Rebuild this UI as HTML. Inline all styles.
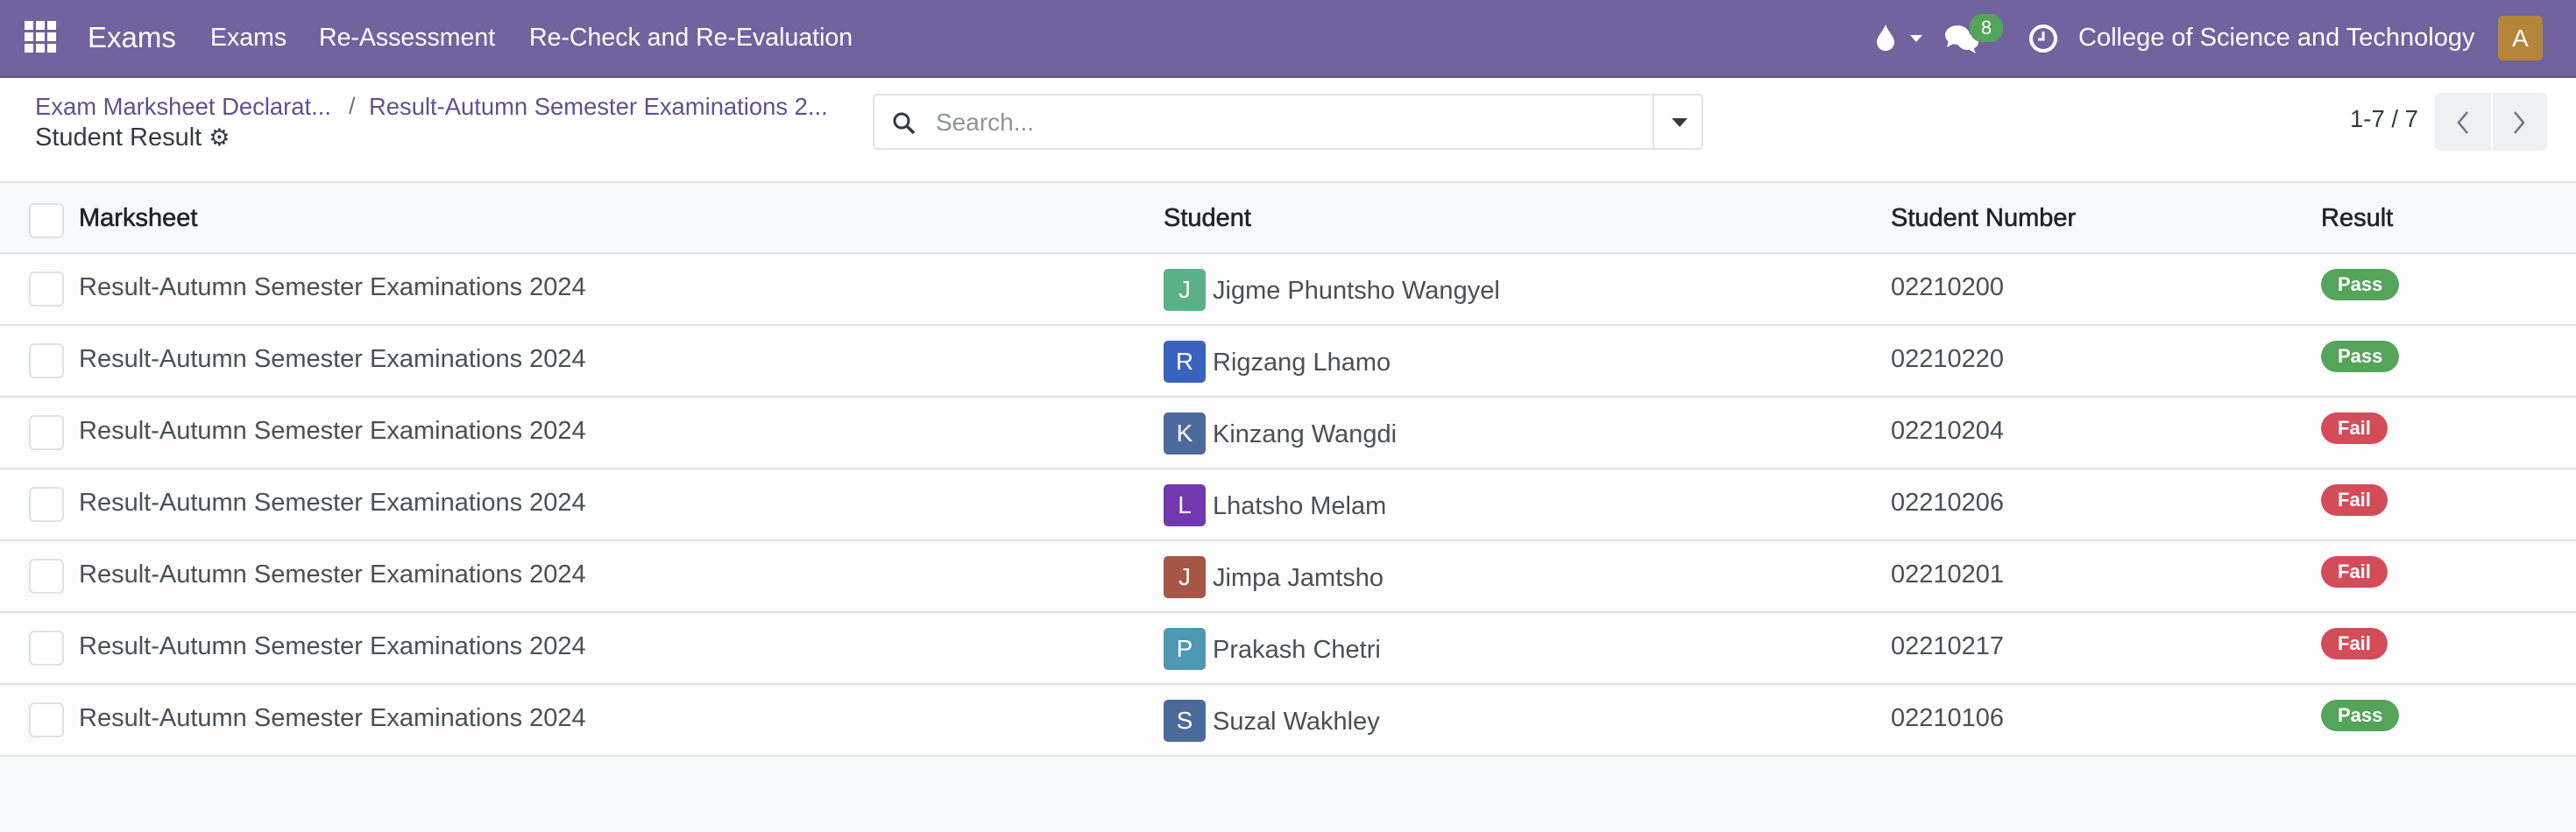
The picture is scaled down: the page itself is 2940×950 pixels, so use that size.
<!DOCTYPE html>
<html><head><meta charset="utf-8"><style>
*{box-sizing:border-box;margin:0;padding:0}
body{width:2940px;height:950px;background:#f8f9fa;font-family:"Liberation Sans",sans-serif;color:#495057;font-size:29px;position:relative;overflow:hidden}
.nav{position:absolute;left:0;top:0;width:2940px;height:89px;background:#71639e;border-bottom:2px solid #5d5283;color:#fff}
.a{position:absolute;white-space:nowrap}
.cp{position:absolute;left:0;top:89px;width:2940px;height:119px;background:#fff}
.crumb{color:#5f5190}
.tbl{position:absolute;left:0;top:207px;width:2940px}
.hdr{height:83px;background:#f8f9fa;border-top:2px solid #dee2e6;border-bottom:2px solid #dee2e6;position:relative;color:#212529;-webkit-text-stroke:0.6px #212529}
.row{height:82px;border-bottom:2px solid #dee2e6;position:relative;background:#fff}
.row:nth-child(odd){background:#fcfcfc}
.cb{position:absolute;left:33px;width:40px;height:40px;border:2px solid #dee2e6;border-radius:6px;background:#fff;-webkit-text-stroke:0}
.av{position:absolute;left:1328px;top:17px;width:48px;height:48px;border-radius:5px;color:#fff;text-align:center;line-height:48px;font-size:28px}
.bd{position:absolute;left:2649px;top:17px;height:36px;border-radius:18px;color:#fff;font-weight:bold;font-size:22px;line-height:36px;padding:0 19px}
.pass{background:#54a45a}.fail{background:#d44c59}
</style></head><body>
<div class="nav">
 <svg class="a" style="left:28px;top:24px" width="36" height="36" viewBox="0 0 36 36" fill="#fff"><rect x="0" y="0" width="10" height="10"/><rect x="13" y="0" width="10" height="10"/><rect x="26" y="0" width="10" height="10"/><rect x="0" y="13" width="10" height="10"/><rect x="13" y="13" width="10" height="10"/><rect x="26" y="13" width="10" height="10"/><rect x="0" y="26" width="10" height="10"/><rect x="13" y="26" width="10" height="10"/><rect x="26" y="26" width="10" height="10"/></svg>
 <div class="a" style="left:100px;top:24px;font-size:33px">Exams</div>
 <div class="a" style="left:240px;top:27px;font-size:28.5px">Exams</div>
 <div class="a" style="left:364px;top:27px;font-size:28.5px">Re-Assessment</div>
 <div class="a" style="left:604px;top:27px;font-size:28.5px">Re-Check and Re-Evaluation</div>
 <svg class="a" style="left:2142px;top:28px" width="20" height="30" viewBox="0 0 20 30"><path d="M10 0C7 8 0 14 0 20a10 10 0 0 0 20 0C20 14 13 8 10 0z" fill="#fff"/></svg>
 <div class="a" style="left:2180px;top:40px;border-left:7px solid transparent;border-right:7px solid transparent;border-top:8px solid #fff"></div>
 <svg class="a" style="left:2220px;top:28px" width="40" height="34" viewBox="0 0 40 34" fill="#fff"><ellipse cx="14" cy="12" rx="14" ry="11"/><path d="M4 18l-2 8 9-5z"/><ellipse cx="26" cy="20" rx="12" ry="9"/><path d="M32 26l3 7-9-5z"/></svg>
 <div class="a" style="left:2248px;top:16px;width:38px;height:32px;border-radius:14px;background:#54a45a;color:#fff;font-size:22px;text-align:center;line-height:32px">8</div>
 <svg class="a" style="left:2315px;top:27px" width="34" height="34" viewBox="0 0 34 34"><circle cx="17" cy="17" r="14" fill="none" stroke="#fff" stroke-width="4"/><path d="M17 9v9h-6" fill="none" stroke="#fff" stroke-width="3"/></svg>
 <div class="a" style="left:2372px;top:27px;font-size:29px">College of Science and Technology</div>
 <div class="a" style="left:2851px;top:18px;width:51px;height:51px;border-radius:6px;background:#b5853a;color:#fff;text-align:center;line-height:51px;font-size:28px">A</div>
</div>
<div class="cp">
 <div class="a crumb" style="left:40px;top:17px;font-size:27.4px">Exam Marksheet Declarat...</div>
 <div class="a" style="left:398px;top:17px;font-size:27px;color:#6c757d">/</div>
 <div class="a crumb" style="left:421px;top:17px;font-size:27.4px">Result-Autumn Semester Examinations 2...</div>
 <div class="a" style="left:40px;top:52px;font-size:29px;color:#343a40">Student Result <span style="font-size:27px">⚙</span></div>
 <div class="a" style="left:996px;top:18px;width:948px;height:64px;border:2px solid #dee2e6;border-radius:6px;background:#fff">
  <svg class="a" style="left:20px;top:18px" width="28" height="28" viewBox="0 0 28 28"><circle cx="11" cy="11" r="8" fill="none" stroke="#343a40" stroke-width="3"/><path d="M17 17l8 8" stroke="#343a40" stroke-width="3.5"/></svg>
  <div class="a" style="left:70px;top:15px;color:#8e949a;font-size:28px">Search...</div>
  <div class="a" style="left:888px;top:0;width:2px;height:60px;background:#dee2e6"></div>
  <div class="a" style="left:910px;top:26px;border-left:9px solid transparent;border-right:9px solid transparent;border-top:10px solid #343a40"></div>
 </div>
 <div class="a" style="left:2682px;top:31px;font-size:27.5px;color:#343a40">1-7 / 7</div>
 <div class="a" style="left:2779px;top:17px;width:64px;height:66px;background:#eff0f2;border-radius:6px 0 0 6px"><svg class="a" style="left:22px;top:20px" width="20" height="28" viewBox="0 0 20 28"><path d="M15 2L5 14l10 12" fill="none" stroke="#6c757d" stroke-width="2.5"/></svg></div>
 <div class="a" style="left:2845px;top:17px;width:62px;height:66px;background:#eff0f2;border-radius:0 6px 6px 0"><svg class="a" style="left:20px;top:20px" width="20" height="28" viewBox="0 0 20 28"><path d="M5 2l10 12L5 26" fill="none" stroke="#6c757d" stroke-width="2.5"/></svg></div>
</div>
<div class="tbl">
 <div class="hdr"><div class="cb" style="top:23px"></div>
  <div class="a" style="left:90px;top:24px">Marksheet</div>
  <div class="a" style="left:1328px;top:24px">Student</div>
  <div class="a" style="left:2158px;top:24px">Student Number</div>
  <div class="a" style="left:2649px;top:24px">Result</div>
 </div>
 <div>
 <div class="row"><div class="cb" style="top:20px"></div><div class="a" style="left:90px;top:22px">Result-Autumn Semester Examinations 2024</div><div class="av" style="background:#5bb187">J</div><div class="a" style="left:1384px;top:26px">Jigme Phuntsho Wangyel</div><div class="a" style="left:2158px;top:22px">02210200</div><div class="bd pass">Pass</div></div>
 <div class="row"><div class="cb" style="top:20px"></div><div class="a" style="left:90px;top:22px">Result-Autumn Semester Examinations 2024</div><div class="av" style="background:#3a62bf">R</div><div class="a" style="left:1384px;top:26px">Rigzang Lhamo</div><div class="a" style="left:2158px;top:22px">02210220</div><div class="bd pass">Pass</div></div>
 <div class="row"><div class="cb" style="top:20px"></div><div class="a" style="left:90px;top:22px">Result-Autumn Semester Examinations 2024</div><div class="av" style="background:#4d6a9c">K</div><div class="a" style="left:1384px;top:26px">Kinzang Wangdi</div><div class="a" style="left:2158px;top:22px">02210204</div><div class="bd fail">Fail</div></div>
 <div class="row"><div class="cb" style="top:20px"></div><div class="a" style="left:90px;top:22px">Result-Autumn Semester Examinations 2024</div><div class="av" style="background:#7238b0">L</div><div class="a" style="left:1384px;top:26px">Lhatsho Melam</div><div class="a" style="left:2158px;top:22px">02210206</div><div class="bd fail">Fail</div></div>
 <div class="row"><div class="cb" style="top:20px"></div><div class="a" style="left:90px;top:22px">Result-Autumn Semester Examinations 2024</div><div class="av" style="background:#a65647">J</div><div class="a" style="left:1384px;top:26px">Jimpa Jamtsho</div><div class="a" style="left:2158px;top:22px">02210201</div><div class="bd fail">Fail</div></div>
 <div class="row"><div class="cb" style="top:20px"></div><div class="a" style="left:90px;top:22px">Result-Autumn Semester Examinations 2024</div><div class="av" style="background:#4e98b3">P</div><div class="a" style="left:1384px;top:26px">Prakash Chetri</div><div class="a" style="left:2158px;top:22px">02210217</div><div class="bd fail">Fail</div></div>
 <div class="row"><div class="cb" style="top:20px"></div><div class="a" style="left:90px;top:22px">Result-Autumn Semester Examinations 2024</div><div class="av" style="background:#4a6b9a">S</div><div class="a" style="left:1384px;top:26px">Suzal Wakhley</div><div class="a" style="left:2158px;top:22px">02210106</div><div class="bd pass">Pass</div></div>
 </div>
</div>
</body></html>
